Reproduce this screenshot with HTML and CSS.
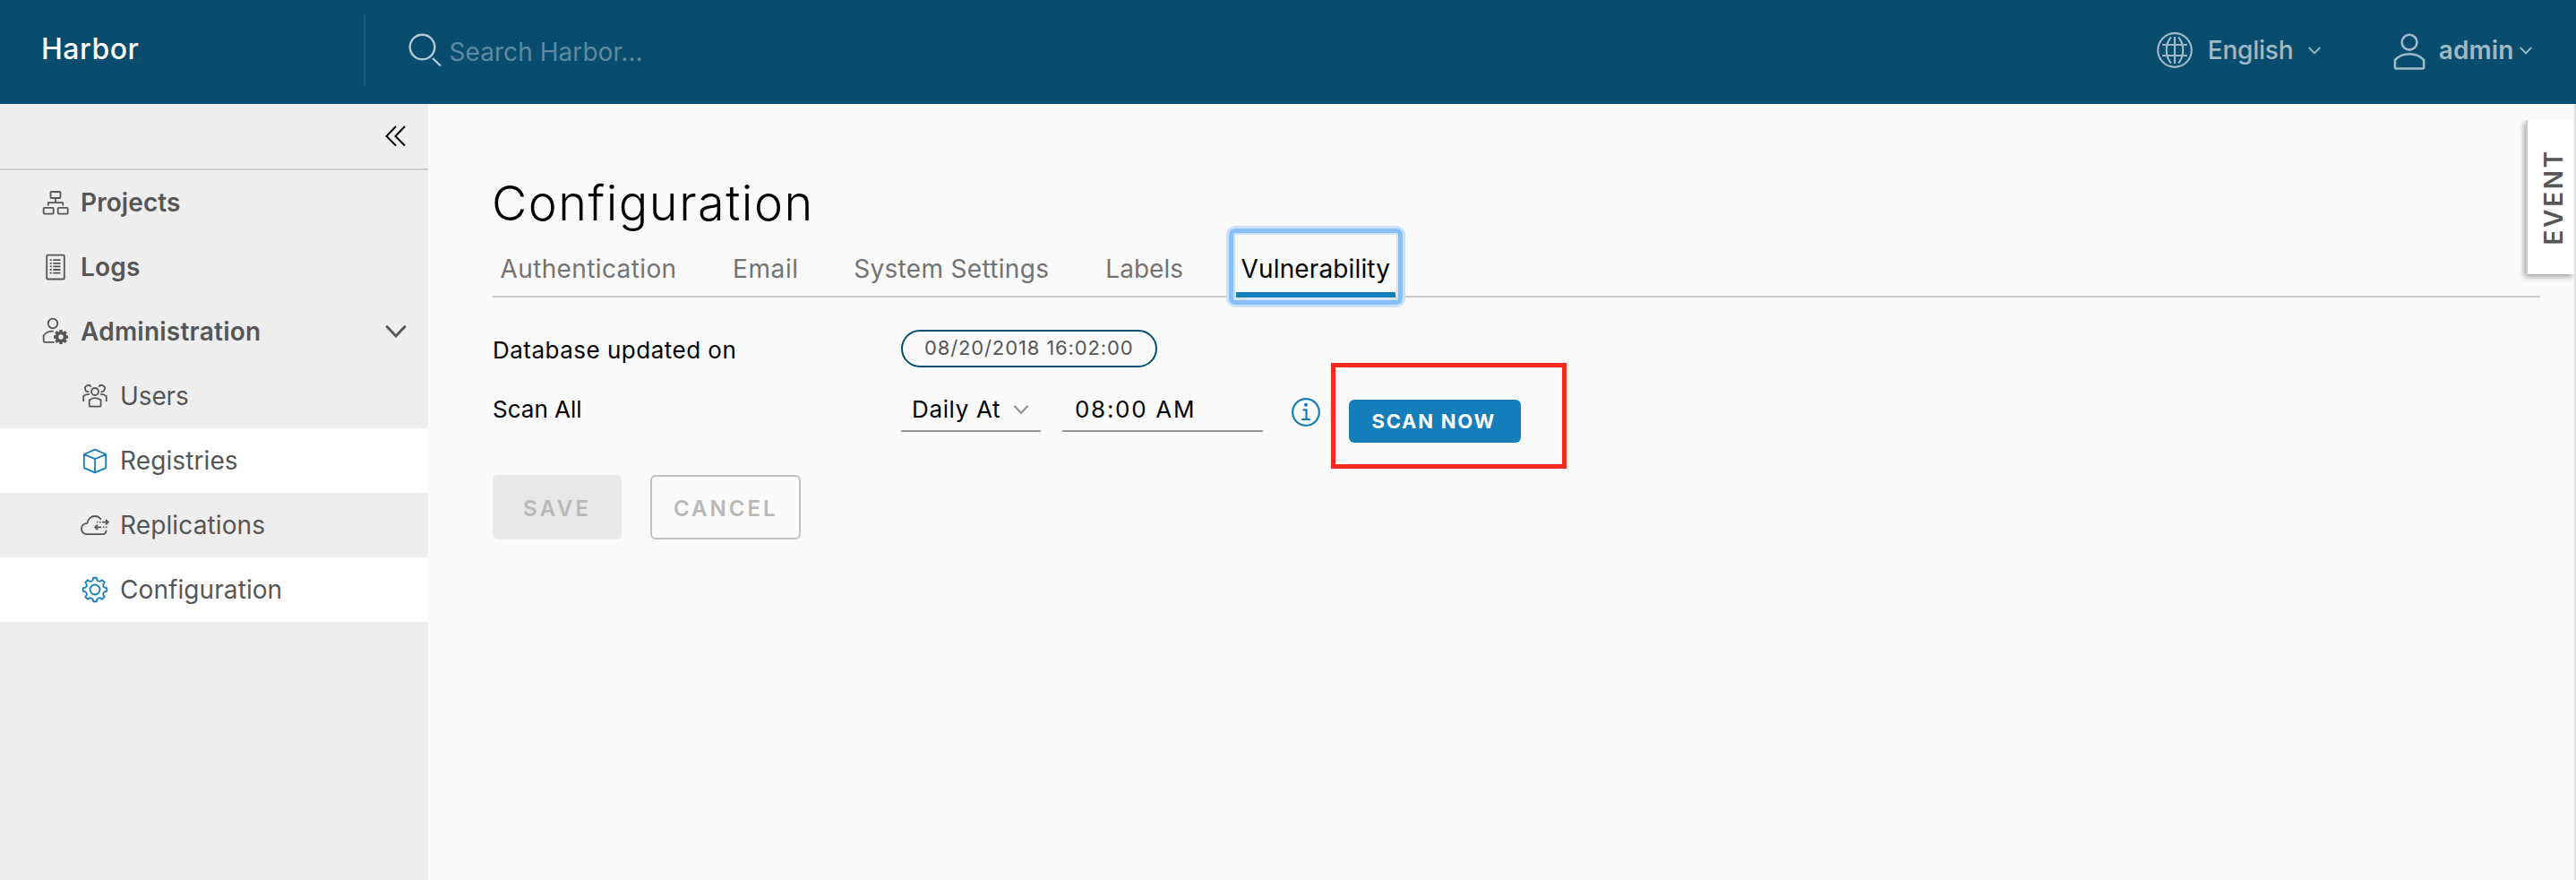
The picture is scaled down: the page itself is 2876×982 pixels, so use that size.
FILE: index.html
```
<!DOCTYPE html>
<html lang="en">
<head>
<meta charset="utf-8">
<title>Harbor</title>
<link rel="stylesheet" href="styles.css">
</head>
<body>
<header class="header">
  <div class="brand">Harbor</div>
  <div class="search">
    <svg class="search-icon" width="38" height="38" viewBox="0 0 38 38"><circle cx="15.5" cy="15.5" r="13.8"/><path d="M27 28 36 36.5"/></svg>
    <span class="search-text">Search Harbor...</span>
  </div>
  <div class="header-actions">
    <svg class="globe" width="40" height="40" viewBox="0 0 40 40"><circle cx="20" cy="20" r="18.8"/><path d="M20 5v30M6 14h28M6 26h28M16 5.5C9 13 9 27 16 34.5M24 5.5C31 13 31 27 24 34.5"/></svg>
    <span class="language">English</span>
    <svg class="caret" width="14" height="9" viewBox="0 0 14 9"><path d="M.8 1 7 7.4 13.2 1"/></svg>
    <svg class="user" width="36" height="42" viewBox="0 0 36 42"><circle cx="18" cy="10.2" r="8.4"/><path d="M1.9 38V30C6 25.5 11.500 23.200 18 23.200S30 25.500 34.100 30V38a1.500 1.500 0 0 1-1.500 1.500H3.400A1.500 1.500 0 0 1 1.900 38Z"/></svg>
    <span class="account">admin</span>
    <svg class="caret" width="14" height="9" viewBox="0 0 14 9"><path d="M.8 1 7 7.4 13.2 1"/></svg>
  </div>
</header>
<div class="main">
  <nav class="sidebar">
    <div class="collapse"><svg width="24" height="24" viewBox="0 0 24 24"><path d="M12 1 1.500 12 12 22.500M22 1 11.500 12 22 22.500"/></svg></div>
    <a class="item projects"><svg class="icon" viewBox="0 0 32 32"><rect x="10.500" y="4" width="11" height="7" rx="1"/><rect x="2.700" y="21.800" width="11" height="6.800" rx="1"/><rect x="18.700" y="21.800" width="11" height="6.800" rx="1"/><path d="M16 11.500V16M7.800 19.500V16.200H24.200V19.500"/></svg><span>Projects</span></a>
    <a class="item logs"><svg class="icon" viewBox="0 0 32 32"><rect x="6.200" y="2.700" width="19.600" height="26.800" rx="1"/><path d="M9.700 8.200h2M9.700 11.800h2M9.700 15.400h2M9.700 19h2M9.700 22.600h2M13.300 8.200h8.200M13.300 11.800h8.200M13.300 15.400h8.200M13.300 19h8.200M13.300 22.600h8.200"/></svg><span>Logs</span></a>
    <a class="item admin"><svg class="icon" viewBox="0 0 32 32"><circle cx="13" cy="7" r="5.300"/><path d="M13.800 15.700C9 15.400 5 17.200 2.700 20.500V26.500a1.300 1.300 0 0 0 1.300 1.300H14.500"/><circle cx="22" cy="22" r="4.500" stroke-width="3.600"/><path d="M22 14v3M22 27v3M14 22h3M27 22h3M16.300 16.300l2 2M25.700 25.700l2 2M27.700 16.300l-2 2M16.300 27.700l2-2" stroke-width="3.400"/></svg><span>Administration</span><svg class="chevron" width="24" height="16" viewBox="0 0 24 16"><path d="M2 2.500 12 13 22 2.500"/></svg></a>
    <a class="item sub users"><svg class="icon" viewBox="0 0 32 32"><circle cx="16" cy="11" r="4"/><path d="M9.700 26.600V20.500C11.500 19 13.500 18.200 16 18.200S20.800 19 22.600 20.500V26.600a1 1 0 0 1-1 1H10.700a1 1 0 0 1-1-1ZM11.700 5.700A3.600 3.600 0 1 0 9.500 11M20.300 5.700A3.600 3.600 0 1 1 22.500 11M10 14C7.200 13.800 4.800 14.600 3.200 16.200V22M22 14C24.800 13.800 27.200 14.600 28.800 16.200V22"/></svg><span>Users</span></a>
    <a class="item sub selected registries"><svg class="icon" viewBox="0 0 32 32"><path d="M16 3.700 28.200 9V24.200L16 29.400 3.800 24.200V9ZM3.800 9 16 14.200 28.200 9M16 14.200V29.400"/></svg><span>Registries</span></a>
    <a class="item sub replications"><svg class="icon" viewBox="0 0 32 32"><path d="M22.800 9.800C21.200 7.200 18.700 6 16 6 11.600 6 8 9.200 7.600 13.800 3.600 14 .9 16.700.9 20S3.500 26.200 7 26.200H24.500C27 26.200 28.500 24.300 28.500 21.800M24 12.700H31M28 10 30.900 12.700 28 15.400M17.900 12.700h1.500M21 12.700h1.500M16.200 18.400H23M19 15.700 16.200 18.400 19 21.100M24.900 18.400h1.500M27.900 18.400h1.500"/></svg><span>Replications</span></a>
    <a class="item sub selected configuration"><svg class="icon" viewBox="0 0 32 32"><path d="M29.270 17.860 26.520 18.430Q25 19.700 25.160 21.720L26.700 24.060 24.060 26.700 21.720 25.160Q19.700 25 18.430 26.520L17.860 29.270H14.140L13.570 26.520Q12.300 25 10.280 25.160L7.940 26.700 5.300 24.060 6.840 21.720Q7 19.700 5.480 18.430L2.730 17.860V14.140L5.480 13.570Q7 12.300 6.840 10.280L5.300 7.940 7.940 5.300 10.280 6.840Q12.300 7 13.570 5.480L14.140 2.730H17.860L18.430 5.480Q19.700 7 21.720 6.840L24.060 5.300 26.700 7.940 25.160 10.280Q25 12.300 26.520 13.570L29.270 14.140Z"/><circle cx="16" cy="16" r="5.500"/></svg><span>Configuration</span></a>
  </nav>
  <main class="content">
    <h1 class="title">Configuration</h1>
    <div class="tabs">
      <a class="tab authentication">Authentication</a>
      <a class="tab email">Email</a>
      <a class="tab system">System Settings</a>
      <a class="tab labels">Labels</a>
      <a class="tab active">Vulnerability</a>
    </div>
    <div class="row updated">
      <label class="label wide">Database updated on</label>
      <span class="badge">08/20/2018 16:02:00</span>
    </div>
    <div class="row scan">
      <label class="label">Scan All</label>
      <div class="select"><span>Daily At</span><svg width="18" height="12" viewBox="0 0 18 12"><path d="M1.500 2 9 9.800 16.500 2"/></svg></div>
      <div class="time">08:00 AM</div>
      <svg class="info" width="32" height="32" viewBox="0 0 32 32"><circle cx="16" cy="16" r="14.800"/><circle class="dot" cx="16" cy="7.700" r="2"/><path d="M12.600 13.300h3.900v10.500M11.200 24h9.600"/></svg>
      <div class="scan-now"><button class="button primary">SCAN NOW</button></div>
    </div>
    <div class="actions">
      <button class="button save">SAVE</button>
      <button class="button cancel">CANCEL</button>
    </div>
  </main>
  <aside class="event"><span>EVENT</span></aside>
</div>
</body>
</html>
```
FILE: styles.css
```
*, *::before, *::after { box-sizing: border-box; }
body {
  margin: 0;
  width: 2876px;
  height: 982px;
  overflow: hidden;
  display: flex;
  flex-direction: column;
  background: #fafafa;
  color: #000;
  font-family: Inter, "Liberation Sans", sans-serif;
}
svg { display: block; flex: none; fill: none; stroke: currentColor; }
span { white-space: nowrap; }

.header {
  display: flex;
  align-items: flex-start;
  height: 116px;
  flex: none;
  background: #084c6e;
  color: #9fb9c7;
}
.brand {
  width: 406px;
  padding-left: 46px;
  font-size: 32px;
  font-weight: 500;
  line-height: 109px;
  letter-spacing: .5px;
  color: #fff;
}
.search {
  display: flex;
  height: 80px;
  margin-top: 16px;
  padding: 0 0 0 47.500px;
  border-left: 2px solid #1f5d7c;
}
.search-icon { margin-top: 21px; stroke-width: 2.4; color: #b5c9d4; }
.search-text {
  margin-left: 8px;
  font-size: 28px;
  line-height: 85px;
  letter-spacing: .06px;
  color: #5f89a1;
}
.header-actions {
  display: flex;
  align-items: center;
  height: 112px;
  margin-left: auto;
  padding-right: 49px;
  font-size: 28px;
}
.globe { stroke-width: 2.2; }
.language { margin: 0 16.400px 0 17px; font-weight: 500; letter-spacing: -.21px; }
.caret { stroke-width: 1.800; }
.user { margin: 4px 15px 0 81px; stroke-width: 2.600; }
.account { margin-right: 6.500px; font-weight: 600; letter-spacing: .1px; }

.main {
  position: relative;
  display: flex;
  flex: 1;
  border-right: 2px solid #e0e0e0;
}
.sidebar { width: 478px; flex: none; background: #eee; color: #565656; }
.collapse {
  display: flex;
  justify-content: flex-end;
  height: 74px;
  padding: 24px 24px 0 0;
  border-bottom: 2px solid #ccc;
  color: #000;
}
.collapse svg { stroke-width: 2; }
.item {
  display: flex;
  align-items: center;
  height: 72px;
  padding: 0 24px 0 46px;
  font-size: 28px;
  font-weight: 600;
}
.icon { width: 32px; height: 32px; margin-right: 12px; overflow: visible; stroke-width: 1.800; stroke-linejoin: round; }
.chevron { margin-left: auto; stroke-width: 2.800; stroke-linecap: round; }
.sub { padding-left: 90px; font-weight: 400; }
.selected { background: #fff; }
.selected .icon { color: #147eba; }
.projects { letter-spacing: .08px; }
.logs { letter-spacing: .2px; }
.admin { letter-spacing: .24px; }
.users { letter-spacing: -.12px; }
.registries { letter-spacing: .1px; }
.replications { letter-spacing: .12px; }
.configuration { letter-spacing: .08px; }

.content { flex: 1; padding: 81px 38px 0 72px; }
.title {
  margin: 0 0 0 -1px;
  font-size: 54px;
  font-weight: 300;
  line-height: 60px;
  letter-spacing: 1.500px;
}
.tabs {
  display: flex;
  gap: 49.500px;
  height: 70px;
  margin-top: 5px;
  padding-left: 2.500px;
  border-bottom: 2px solid #ccc;
}
.tab {
  height: 70px;
  padding: 8px 6px 0;
  font-size: 28px;
  line-height: 60px;
  color: #737373;
}
.authentication { letter-spacing: .38px; }
.email { position: relative; left: 1px; letter-spacing: .6px; }
.system { margin-left: 1px; letter-spacing: .32px; }
.labels { margin-left: 1.500px; letter-spacing: .04px; }
.active {
  position: relative;
  width: 178px;
  margin-left: 3px;
  letter-spacing: .13px;
  color: #000;
  box-shadow: inset 0 -6px #147eba;
}
.active::after {
  content: "";
  position: absolute;
  inset: -7px -8px -8px;
  border: 5px solid #87bffd;
  border-radius: 7px;
  box-shadow: 0 0 0 3px #c9e1fb, inset 0 0 0 2px #c9e1fb;
}

.row { display: flex; align-items: flex-start; font-size: 26px; }
.updated { margin-top: 36px; }
.scan { margin-top: 22px; }
.label { width: 456px; line-height: 49px; }
.wide { line-height: 45px; height: 42px; letter-spacing: .49px; }
.badge {
  width: 286px;
  height: 42px;
  padding-left: 24px;
  border: 2px solid #004c70;
  border-radius: 21px;
  font-size: 22px;
  line-height: 36px;
  letter-spacing: .87px;
  color: #565656;
}
.select, .time { height: 50px; border-bottom: 2px solid #999; line-height: 49px; }
.select {
  display: flex;
  justify-content: space-between;
  width: 156px;
  padding: 0 13px 0 12px;
  letter-spacing: .65px;
}
.select svg { margin-top: 19px; stroke-width: 2.400; color: #999; }
.time { width: 224px; margin-left: 24px; padding-left: 14px; letter-spacing: 1.710px; }
.info { margin: 12px 0 0 32px; stroke-width: 2.200; color: #147eba; }
.info .dot { fill: currentColor; stroke: none; }
.scan-now { position: relative; margin: 14px 0 0 32px; }
.scan-now::after {
  content: "";
  position: absolute;
  left: -20.500px;
  top: -41.500px;
  width: 263px;
  height: 118px;
  border: 5px solid #ff2a1b;
}
.button {
  display: block;
  padding: 0;
  border: 0;
  border-radius: 6px;
  text-align: left;
  font-family: inherit;
}
.primary {
  width: 192px;
  height: 48px;
  padding-left: 25.500px;
  background: #147eba;
  color: #fff;
  font-size: 22px;
  font-weight: 700;
  letter-spacing: 1.760px;
}
.actions { display: flex; gap: 32px; margin-top: 36px; }
.save, .cancel { height: 72px; padding-top: 2px; color: #b8b8b8; font-size: 24px; font-weight: 600; }
.save { width: 144px; padding-left: 34px; background: #e8e8e8; letter-spacing: 3.340px; }
.cancel { width: 168px; padding-left: 24px; border: 2px solid #c1c1c1; background: none; letter-spacing: 3px; }

.event {
  position: absolute;
  right: 0;
  top: 18px;
  display: flex;
  align-items: center;
  width: 54px;
  height: 172px;
  padding-left: 11.500px;
  border-left: 2px solid #ccc;
  background: #fff;
  box-shadow: -2px 3px 6px rgba(0, 0, 0, .35);
  clip-path: inset(0 0 -14px -14px);
  color: #565656;
  font-size: 28px;
  font-weight: 600;
  letter-spacing: 2.700px;
}
.event span { writing-mode: vertical-rl; transform: rotate(180deg); }
```
